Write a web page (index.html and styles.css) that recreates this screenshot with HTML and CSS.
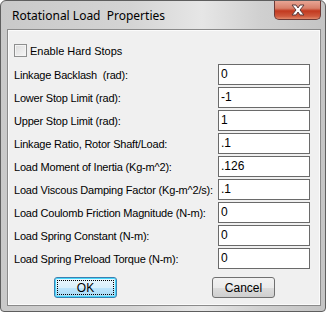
FILE: index.html
```html
<!DOCTYPE html>
<html lang="en">
<head>
    <meta charset="UTF-8">
    <title>Rotational Load Properties</title>
    <link rel="stylesheet" href="styles.css">
</head>
<body>
    <div class="window">
        <div class="titlebar">
            <span class="title">Rotational Load&nbsp; Properties</span>
            <div class="close">
                <svg width="16" height="12" viewBox="0 0 16 12">
                    <path d="M2 1h4l2 3 2-3h4l-4 5 4 5h-4l-2-3-2 3H2l4-5z" fill="#fff" stroke="#5a3a3a" stroke-width="1"/>
                </svg>
            </div>
        </div>
        <div class="client">
            <label class="check-row">
                <span class="checkbox"></span>
                <span>Enable Hard Stops</span>
            </label>
            <div class="fields">
                <span class="label">Linkage Backlash&nbsp; (rad):</span>
                <span class="input">0</span>
                <span class="label">Lower Stop Limit (rad):</span>
                <span class="input">-1</span>
                <span class="label">Upper Stop Limit (rad):</span>
                <span class="input">1</span>
                <span class="label">Linkage Ratio, Rotor Shaft/Load:</span>
                <span class="input">.1</span>
                <span class="label">Load Moment of Inertia (Kg-m^2):</span>
                <span class="input">.126</span>
                <span class="label">Load Viscous Damping Factor (Kg-m^2/s):</span>
                <span class="input">.1</span>
                <span class="label">Load Coulomb Friction Magnitude (N-m):</span>
                <span class="input">0</span>
                <span class="label">Load Spring Constant (N-m):</span>
                <span class="input">0</span>
                <span class="label">Load Spring Preload Torque (N-m):</span>
                <span class="input">0</span>
            </div>
            <div class="buttons">
                <div class="button default"><span class="focus">OK</span></div>
                <div class="button">Cancel</div>
            </div>
        </div>
    </div>
</body>
</html>
```

FILE: styles.css
```css
body {
    margin: 0;
    padding: 0;
    background-color: #fff;
}
.window {
    width: 324px;
    height: 310px;
    border: 1px solid #5e5e5e;
    border-radius: 6px 6px 4px 4px;
    background: linear-gradient(to right, #c9c9c9 0%, #d4d4d4 40%, #e6e6e6 62%, #d0d0d0 80%, #c4c4c4 100%);
    display: flex;
    flex-direction: column;
}
.titlebar {
    height: 28px;
    display: flex;
    align-items: flex-start;
}
.title {
    font-family: "Noto Sans", "Open Sans", sans-serif;
    font-size: 12px;
    color: #000;
    margin: 7px 0 0 11px;
    line-height: 16px;
}
.close {
    margin-left: auto;
    margin-right: 4px;
    width: 45px;
    height: 18px;
    border: 1px solid #6d3a36;
    border-top: none;
    border-radius: 0 0 5px 5px;
    background: linear-gradient(to bottom, #e8a594 0%, #d8806a 40%, #c2391f 55%, #cf5a3e 85%, #e08a6c 100%);
    display: flex;
    align-items: center;
    justify-content: center;
}
.client {
    margin: 0 4px 5px 6px;
    flex: 1;
    border: 1px solid #8a8a8a;
    box-shadow: inset 0 0 0 1px #fbfbfb;
    background-color: #f0f0f0;
    padding: 14px 10px 0 6px;
    font-family: "Liberation Sans", Arial, sans-serif;
    font-size: 11px;
    color: #000;
}
.check-row {
    display: flex;
    align-items: center;
    gap: 3px;
    height: 13px;
}
.checkbox {
    width: 11px;
    height: 11px;
    border: 1px solid #8e8f8f;
    background: linear-gradient(135deg, #dcdcdc 0%, #f6f6f6 100%);
    box-shadow: inset 0 0 0 1px #f4f4f4;
}
.fields {
    margin-top: 7px;
    display: grid;
    grid-template-columns: 1fr 92px;
    grid-auto-rows: 21px;
    row-gap: 2px;
    align-items: center;
}
.label {
    letter-spacing: -0.2px;
}
.input {
    height: 19px;
    border: 1px solid #6a6a6a;
    background-color: #fff;
    padding-left: 2px;
    line-height: 19px;
    font-size: 12px;
}
.buttons {
    margin-top: 8px;
    display: flex;
    gap: 95px;
    padding-left: 40px;
}
.button {
    width: 61px;
    height: 19px;
    border: 1px solid #707070;
    border-radius: 3px;
    background: linear-gradient(to bottom, #f2f2f2 0%, #ebebeb 50%, #dddddd 51%, #cfcfcf 100%);
    display: flex;
    align-items: center;
    justify-content: center;
    font-size: 12px;
}
.button.default {
    border-color: #3c7fb1;
    box-shadow: inset 0 0 0 1px #48d8fb;
    background: linear-gradient(to bottom, #eaf6fd 0%, #d9f0fc 50%, #bee6fd 51%, #a7d9f5 100%);
}
.focus {
    flex: 1;
    align-self: stretch;
    margin: 2px;
    border: 1px dotted #000;
    display: flex;
    align-items: center;
    justify-content: center;
}
```
